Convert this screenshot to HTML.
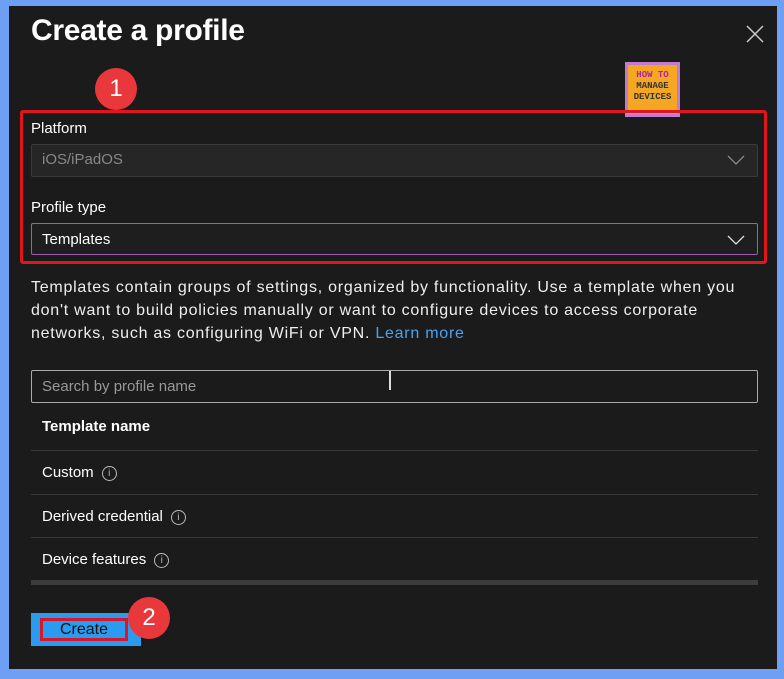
<!DOCTYPE html>
<html><head><style>
*{margin:0;padding:0;box-sizing:border-box}
body{width:784px;height:679px;background:#6f9ef5;position:relative;overflow:hidden;font-family:"Liberation Sans",sans-serif;color:#fff}
.p{position:absolute;left:9px;top:6px;width:768px;height:663px;background:#1b1b1b}
.a{position:absolute}
.t{font-size:14.5px;white-space:nowrap}
.box{position:absolute;border:1px solid #555;background:#222;border-radius:2px}
.line{position:absolute;left:31px;width:727px;height:1px;background:#3a3a3a}
.info{display:inline-block;width:15px;height:15px;border:1px solid #bbb;border-radius:50%;font-size:10px;text-align:center;line-height:13px;color:#bbb;vertical-align:1px;margin-left:8px}
</style></head><body>
<div class="p"></div>
<div class="a" style="left:31px;top:14px;font-size:30px;font-weight:bold;letter-spacing:-0.3px">Create a profile</div>
<svg class="a" style="left:746px;top:25px" width="18" height="18"><path d="M1 1L17 17M17 1L1 17" stroke="#ccc" stroke-width="1.5"/></svg>
<div class="a" style="left:95px;top:68px;width:42px;height:42px;border-radius:50%;background:#e8383c;font-size:24px;text-align:center;line-height:42px">1</div>
<div class="a" style="left:625px;top:62px;width:55px;height:55px;background:#c07ad0;padding:3px"><div style="background:#f5a623;width:49px;height:49px;overflow:hidden;font-family:'Liberation Mono',monospace;font-size:9px;font-weight:bold;text-align:center;color:#b0249e;line-height:11px;padding-top:5px">HOW TO<br><span style="color:#333">MANAGE<br>DEVICES</span></div></div>
<div class="a" style="left:20px;top:110px;width:747px;height:154px;border:3px solid #e0161c;border-radius:3px"></div>
<div class="a t" style="left:31px;top:120px;font-size:15px">Platform</div>
<div class="box" style="left:31px;top:144px;width:727px;height:33px;border-color:#3a3a3a;background:#262626"></div>
<div class="a t" style="left:42px;top:151px;color:#888;font-size:15px">iOS/iPadOS</div>
<svg class="a" style="left:727px;top:154px" width="18" height="12"><path d="M1 2L9 10L17 2" stroke="#888" fill="none" stroke-width="1.3"/></svg>
<div class="a t" style="left:31px;top:199px;font-size:15px">Profile type</div>
<div class="box" style="left:31px;top:223px;width:727px;height:32px;border-color:#9b5fb0;background:#1e1e1e"></div>
<div class="a t" style="left:42px;top:231px;font-size:15px">Templates</div>
<svg class="a" style="left:727px;top:234px" width="18" height="12"><path d="M1 2L9 10L17 2" stroke="#ddd" fill="none" stroke-width="1.3"/></svg>
<div class="a" style="left:31px;top:276px;width:750px;font-size:16px;letter-spacing:0.75px;line-height:23px;color:#eee;white-space:nowrap">Templates contain groups of settings, organized by functionality. Use a template when you<br>don't want to build policies manually or want to configure devices to access corporate<br>networks, such as configuring WiFi or VPN. <span style="color:#4aa3f0">Learn more</span></div>
<div class="box" style="left:31px;top:370px;width:727px;height:33px;border-color:#aaa;background:#1b1b1b"></div>
<div class="a t" style="left:42px;top:378px;color:#999;font-size:15px">Search by profile name</div>
<div class="a" style="left:389px;top:371px;width:2px;height:19px;background:#ddd"></div>
<div class="a t" style="left:42px;top:418px;font-weight:bold;font-size:15px">Template name</div>
<div class="line" style="top:450px"></div>
<div class="a t" style="left:42px;top:464px;font-size:15px">Custom<span class="info">i</span></div>
<div class="line" style="top:494px"></div>
<div class="a t" style="left:42px;top:508px;font-size:15px">Derived credential<span class="info">i</span></div>
<div class="line" style="top:537px"></div>
<div class="a t" style="left:42px;top:551px;font-size:15px">Device features<span class="info">i</span></div>
<div class="a" style="left:31px;top:580px;width:727px;height:5px;background:#3c3c3c"></div>
<div class="a" style="left:31px;top:613px;width:110px;height:33px;background:#2b9bf0"></div>
<div class="a" style="left:40px;top:618px;width:88px;height:23px;border:3px solid #d8182a;color:#111;font-size:16px;text-align:center;line-height:17px">Create</div>
<div class="a" style="left:128px;top:597px;width:42px;height:42px;border-radius:50%;background:#e8383c;font-size:24px;text-align:center;line-height:42px">2</div>
</body></html>
